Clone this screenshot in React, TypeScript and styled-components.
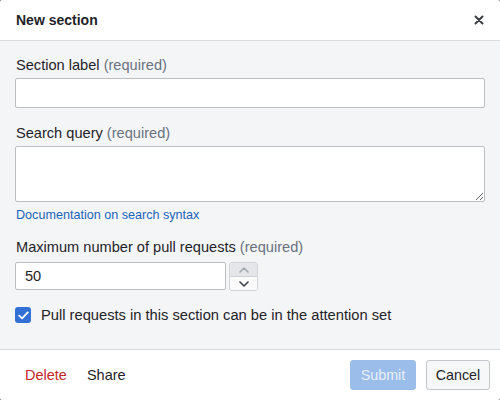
import React from "react";
import styled, { createGlobalStyle } from "styled-components";

const Global = createGlobalStyle`
  html, body { margin: 0; padding: 0; background: #6b6e73; }
  body { font-family: "Liberation Sans", Arial, Helvetica, sans-serif; color: #1f2328; }
  * { box-sizing: border-box; }
`;

const Dialog = styled.div`
  width: 500px;
  height: 400px;
  display: flex;
  flex-direction: column;
  background: #fff;
  border-radius: 2px;
  overflow: hidden;
`;

const Header = styled.div`
  height: 41px;
  flex: none;
  display: flex;
  align-items: center;
  justify-content: space-between;
  padding: 0 16px;
  border-bottom: 1px solid #d8dade;
`;

const Title = styled.h1`
  margin: 0;
  font-size: 14px;
  font-weight: 700;
  color: #1f2328;
  line-height: 17px;
`;

const CloseButton = styled.button`
  border: none;
  background: none;
  padding: 0;
  width: 14px;
  height: 14px;
  display: flex;
  align-items: center;
  justify-content: center;
  margin-right: -2px;
  cursor: pointer;
`;

const Body = styled.div`
  flex: 1;
  background: #f4f5f7;
  padding: 15px 15px 0 15px;
  display: flex;
  flex-direction: column;
`;

const Field = styled.div<{ $gap?: number }>`
  display: flex;
  flex-direction: column;
  margin-bottom: ${(p) => p.$gap ?? 16}px;
`;

const Label = styled.label<{ $space?: number }>`
  display: block;
  font-size: 14.6px;
  line-height: 18px;
  margin: 0 0 ${(p) => p.$space ?? 4}px 1px;
  color: #1f2328;
`;

const Req = styled.span`
  color: #6a7280;
`;

const TextInput = styled.input`
  width: 470px;
  height: 30px;
  border: 1px solid #bcbec2;
  border-radius: 2px;
  background: #fff;
  font: inherit;
  font-size: 14.6px;
  padding: 0 9px;
  outline: none;
`;

const TextArea = styled.textarea`
  width: 470px;
  height: 56px;
  border: 1px solid #bcbec2;
  border-radius: 2px;
  background: #fff;
  font: inherit;
  font-size: 14.6px;
  padding: 6px 9px;
  outline: none;
  resize: vertical;
  display: block;
`;

const DocLink = styled.a`
  display: block;
  margin: 5px 0 0 1px;
  font-size: 12.6px;
  line-height: 16px;
  color: #1b63b8;
  text-decoration: none;
`;

const NumberRow = styled.div`
  display: flex;
  align-items: flex-start;
  gap: 3px;
`;

const NumberInput = styled.input`
  width: 211px;
  height: 28px;
  border: 1px solid #bcbec2;
  border-radius: 2px;
  background: #fff;
  font: inherit;
  font-size: 14.6px;
  padding: 0 9px;
  outline: none;
  color: #1f2328;
`;

const Spinner = styled.div`
  display: flex;
  flex-direction: column;
  width: 29px;
  height: 29px;
  border-radius: 3px;
  overflow: hidden;
  border: 1px solid #d2d4d8;
`;

const SpinButton = styled.button<{ $active?: boolean }>`
  flex: 1;
  border: none;
  padding: 0;
  margin: 0;
  display: flex;
  align-items: center;
  justify-content: center;
  background: ${(p) => (p.$active ? "#fbfbfc" : "#e4e6ea")};
  color: ${(p) => (p.$active ? "#3d4148" : "#a3a8b0")};
  & + & {
    border-top: 1px solid #cfd2d6;
  }
`;

const CheckRow = styled.label`
  display: flex;
  align-items: center;
  gap: 10px;
  margin-top: 15px;
  font-size: 14.7px;
  line-height: 18px;
  color: #1f2328;
`;

const CheckBox = styled.span`
  width: 16px;
  height: 16px;
  border-radius: 3px;
  background: #3270d6;
  display: flex;
  align-items: center;
  justify-content: center;
  flex: none;
`;

const Footer = styled.div`
  height: 51px;
  flex: none;
  border-top: 1px solid #d8dade;
  display: flex;
  align-items: center;
  padding: 0 10px 0 15px;
`;

const TextButton = styled.button<{ $danger?: boolean }>`
  border: none;
  background: none;
  font: inherit;
  font-size: 14.5px;
  height: 30px;
  padding: 0 10px;
  color: ${(p) => (p.$danger ? "#c4262b" : "#1f2328")};
  cursor: pointer;
`;

const Spacer = styled.div`
  flex: 1;
`;

const Actions = styled.div`
  display: flex;
  gap: 10px;
`;

const Button = styled.button<{ $primary?: boolean }>`
  height: 30px;
  border-radius: 3px;
  font: inherit;
  font-size: 14.3px;
  padding: 0;
  border: 1px solid ${(p) => (p.$primary ? "#9bbde9" : "#c3c6cb")};
  background: ${(p) => (p.$primary ? "#9bbde9" : "#f6f7f9")};
  color: ${(p) => (p.$primary ? "#e8f0fb" : "#1f2328")};
  width: ${(p) => (p.$primary ? 66 : 64)}px;
`;

const Chevron = ({ up }: { up?: boolean }) => (
  <svg width="10" height="6" viewBox="0 0 10 6" fill="none">
    <path
      d={up ? "M1 5 L5 1 L9 5" : "M1 1 L5 5 L9 1"}
      stroke="currentColor"
      strokeWidth="1.6"
      strokeLinecap="round"
      strokeLinejoin="round"
    />
  </svg>
);

export default function App() {
  return (
    <>
      <Global />
      <Dialog>
        <Header>
          <Title>New section</Title>
          <CloseButton aria-label="Close">
            <svg width="10" height="10" viewBox="0 0 10 10">
              <path d="M1.5 1.5 L8.5 8.5 M8.5 1.5 L1.5 8.5" stroke="#3a3d42" strokeWidth="2" strokeLinecap="round" />
            </svg>
          </CloseButton>
        </Header>
        <Body>
          <Field>
            <Label>
              Section label <Req>(required)</Req>
            </Label>
            <TextInput type="text" />
          </Field>
          <Field $gap={15}>
            <Label>
              Search query <Req>(required)</Req>
            </Label>
            <TextArea />
            <DocLink href="#">Documentation on search syntax</DocLink>
          </Field>
          <Field $gap={0}>
            <Label $space={6}>
              Maximum number of pull requests <Req>(required)</Req>
            </Label>
            <NumberRow>
              <NumberInput type="text" defaultValue="50" />
              <Spinner>
                <SpinButton aria-label="Increase">
                  <Chevron up />
                </SpinButton>
                <SpinButton $active aria-label="Decrease">
                  <Chevron />
                </SpinButton>
              </Spinner>
            </NumberRow>
          </Field>
          <CheckRow>
            <CheckBox>
              <svg width="11" height="9" viewBox="0 0 11 9" fill="none">
                <path d="M1.2 4.6 L4.1 7.4 L9.8 1.4" stroke="#fff" strokeWidth="1.8" strokeLinecap="round" strokeLinejoin="round" />
              </svg>
            </CheckBox>
            Pull requests in this section can be in the attention set
          </CheckRow>
        </Body>
        <Footer>
          <TextButton $danger>Delete</TextButton>
          <TextButton>Share</TextButton>
          <Spacer />
          <Actions>
            <Button $primary>Submit</Button>
            <Button>Cancel</Button>
          </Actions>
        </Footer>
      </Dialog>
    </>
  );
}
